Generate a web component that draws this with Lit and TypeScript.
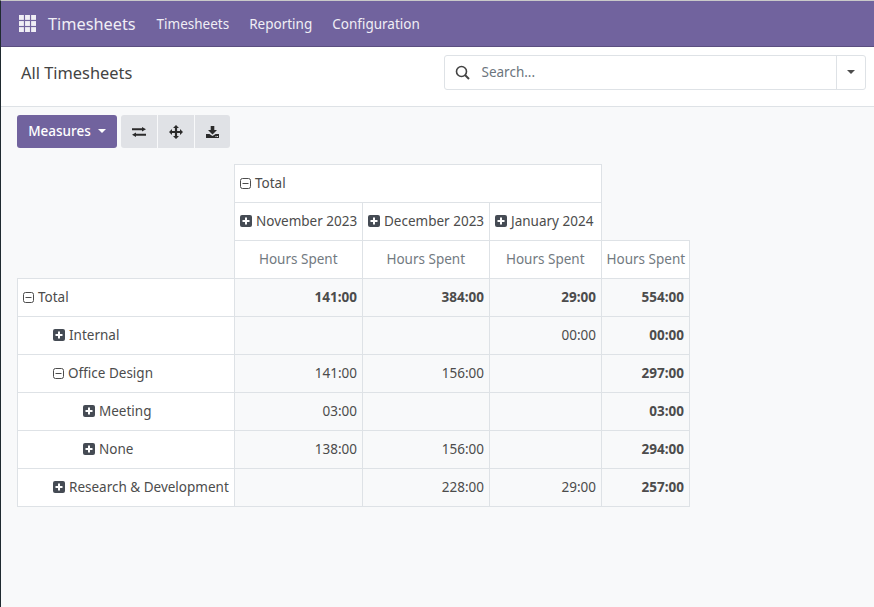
import { LitElement, html, css, svg } from 'lit';
import { customElement } from 'lit/decorators.js';

interface PivotRow {
  label: string;
  depth: number;
  open: boolean;
  values: string[];
  head?: boolean;
}

const ROWS: PivotRow[] = [
  { label: 'Total', depth: 0, open: true, head: true, values: ['141:00', '384:00', '29:00', '554:00'] },
  { label: 'Internal', depth: 1, open: false, values: ['', '', '00:00', '00:00'] },
  { label: 'Office Design', depth: 1, open: true, values: ['141:00', '156:00', '', '297:00'] },
  { label: 'Meeting', depth: 2, open: false, values: ['03:00', '', '', '03:00'] },
  { label: 'None', depth: 2, open: false, values: ['138:00', '156:00', '', '294:00'] },
  { label: 'Research & Development', depth: 1, open: false, values: ['', '228:00', '29:00', '257:00'] },
];

const INDENT = ['indent0', 'indent1', 'indent2'];

@customElement('app-root')
export class AppRoot extends LitElement {
  static styles = css`
    :host {
      display: block;
      height: 607px;
      overflow: hidden;
      background: #f8f9fa;
      border-left: 1px solid #1f2a30;
      border-top: 1px solid #c9c9c9;
      box-sizing: border-box;
      font-family: 'Noto Sans', sans-serif;
      font-size: 13.5px;
      color: #4c4c4c;
    }
    .nav {
      height: 46px;
      box-sizing: border-box;
      background: #71639e;
      border-bottom: 1px solid #5b4f80;
      display: flex;
      align-items: center;
      color: #fff;
    }
    .apps {
      display: flex;
      margin-left: 18px;
      margin-right: 12px;
    }
    .brand {
      font-size: 16.3px;
      margin-right: 21px;
      color: #f0eef5;
    }
    .menu {
      margin-right: 20px;
      color: #f0eef5;
    }
    .panel {
      height: 60px;
      box-sizing: border-box;
      background: #fff;
      border-bottom: 1px solid #dee2e6;
      display: flex;
      align-items: center;
      justify-content: space-between;
      padding: 0 8px 9px 20px;
    }
    .title {
      font-size: 16.4px;
      color: #434343;
    }
    .search {
      width: 422px;
      height: 35px;
      box-sizing: border-box;
      border: 1px solid #dee2e6;
      border-radius: 3px;
      display: flex;
      align-items: center;
    }
    .search-icon {
      display: flex;
      margin-left: 10px;
      margin-right: 11.5px;
    }
    .placeholder {
      flex: 1;
      color: #6c757d;
    }
    .drop {
      width: 28px;
      height: 100%;
      border-left: 1px solid #dee2e6;
      display: flex;
      align-items: center;
      justify-content: center;
    }
    .caret {
      width: 0;
      height: 0;
      border-left: 4px solid transparent;
      border-right: 4px solid transparent;
      border-top: 4px solid #4c4c4c;
    }
    .toolbar {
      display: flex;
      padding: 8px 0 0 16px;
      height: 33px;
    }
    .measures {
      width: 100px;
      height: 33px;
      box-sizing: border-box;
      background: #71639e;
      color: #fff;
      border-radius: 3px;
      display: flex;
      align-items: center;
      justify-content: center;
      gap: 7px;
      font-weight: 500;
      margin-right: 4px;
      padding-bottom: 2px;
    }
    .measures .caret {
      border-top-color: #fff;
    }
    .tool {
      width: 36px;
      height: 33px;
      background: #e0e2e6;
      display: flex;
      align-items: center;
      justify-content: center;
      margin-right: 1px;
    }
    .tool.first {
      border-radius: 3px 0 0 3px;
    }
    .tool.last {
      width: 35px;
      margin-right: 0;
      border-radius: 0 3px 3px 0;
    }
    table {
      border-collapse: collapse;
      table-layout: fixed;
      width: 672px;
      margin: 16px 0 0 15.5px;
    }
    td, th {
      height: 38px;
      padding: 0 4.5px 2px 5px;
      box-sizing: border-box;
      border: 1px solid #dee2e6;
      font-weight: 400;
      white-space: nowrap;
      overflow: visible;
    }
    .blank {
      border: none;
      border-bottom: 1px solid #dee2e6;
      background: transparent;
    }
    .top {
      background: #fff;
      text-align: left;
    }
    .measure {
      background: #fff;
      color: #727a81;
      text-align: center;
    }
    .row-head {
      background: #fff;
      text-align: left;
    }
    .value {
      background: #f8f9fa;
      text-align: right;
    }
    .strong {
      font-weight: 700;
    }
    .indent1 {
      padding-left: 35px;
    }
    .indent2 {
      padding-left: 65px;
    }
    .cell {
      display: flex;
      align-items: center;
      gap: 4.5px;
    }
    .cell svg {
      flex: none;
      margin-top: 1px;
    }
  `;

  private gridIcon() {
    const cells = [];
    for (let y = 0; y < 3; y++) {
      for (let x = 0; x < 3; x++) {
        cells.push(svg`<rect x=${x * 6.2} y=${y * 6.2} width="5" height="5" fill="#f0eef5"/>`);
      }
    }
    return html`<svg class="apps" width="17" height="17" viewBox="0 0 17.4 17.4">${cells}</svg>`;
  }

  private toggle(open: boolean) {
    if (open) {
      return html`<svg width="11" height="11" viewBox="0 0 11 11">
        <rect x=".5" y=".5" width="10" height="10" rx="2" fill="none" stroke="#4c4c4c"/>
        <path d="M2.5 5.5h6" stroke="#4c4c4c" stroke-width="1"/>
      </svg>`;
    }
    return html`<svg width="12" height="12" viewBox="0 0 12 12">
      <rect width="12" height="12" rx="2" fill="#454b54"/>
      <path d="M6 2.5v7M2.5 6h7" stroke="#fff" stroke-width="2"/>
    </svg>`;
  }

  private label(text: string, open: boolean) {
    return html`<div class="cell">${this.toggle(open)}<span>${text}</span></div>`;
  }

  render() {
    return html`
      <div class="nav">
        ${this.gridIcon()}
        <span class="brand">Timesheets</span>
        <span class="menu">Timesheets</span>
        <span class="menu">Reporting</span>
        <span class="menu">Configuration</span>
      </div>
      <div class="panel">
        <span class="title">All Timesheets</span>
        <div class="search">
          <span class="search-icon">
            <svg width="15" height="15" viewBox="0 0 15 15" fill="none" stroke="#434343">
              <circle cx="6.5" cy="6.5" r="5" stroke-width="1.6"/>
              <path d="M10 10l4 4" stroke-width="2"/>
            </svg>
          </span>
          <span class="placeholder">Search...</span>
          <span class="drop"><span class="caret"></span></span>
        </div>
      </div>
      <div class="toolbar">
        <div class="measures">Measures <span class="caret"></span></div>
        <div class="tool first">
          <svg width="14" height="10" viewBox="0 0 14 10" fill="#2b2b2b">
            <path d="M0 1.2h10V0l4 2.2-4 2.2V3.2H0zM14 6.8v2H4V10L0 7.8l4-2.2v1.2z"/>
          </svg>
        </div>
        <div class="tool">
          <svg width="14" height="14" viewBox="0 0 14 14" fill="#2b2b2b">
            <path d="M7 0l3 3H8.1v2.9H11V4l3 3-3 3V8.1H8.1V11H10l-3 3-3-3h1.9V8.1H3V10L0 7l3-3v1.9h2.9V3H4z"/>
          </svg>
        </div>
        <div class="tool last">
          <svg width="13" height="12" viewBox="0 0 13 12" fill="#2b2b2b">
            <path d="M4.7 0h3.6v4H11L6.5 8.5 2 4H4.7zM0 8h3.4l3.1 2 3.1-2H13v4H0z"/>
            <rect x="9.5" y="10" width="1" height="1" fill="#e0e2e6"/>
            <rect x="11" y="10" width="1" height="1" fill="#e0e2e6"/>
          </svg>
        </div>
      </div>
      <table>
        <colgroup>
          <col style="width:217px" /><col style="width:128px" /><col style="width:127px" /><col style="width:112px" /><col style="width:88px" />
        </colgroup>
        <tr>
          <th class="blank" rowspan="3"></th>
          <th class="top" colspan="3">${this.label('Total', true)}</th>
          <th style="border:none"></th>
        </tr>
        <tr>
          <th class="top">${this.label('November 2023', false)}</th>
          <th class="top">${this.label('December 2023', false)}</th>
          <th class="top">${this.label('January 2024', false)}</th>
          <th style="border:none;border-bottom:1px solid #dee2e6"></th>
        </tr>
        <tr>
          ${[0, 1, 2, 3].map(() => html`<th class="measure">Hours Spent</th>`)}
        </tr>
        ${ROWS.map(
          (row) => html`<tr>
            <td class="row-head ${INDENT[row.depth]}">${this.label(row.label, row.open)}</td>
            ${row.values.map(
              (v, i) => html`<td class="value ${row.head || i === 3 ? 'strong' : ''}">${v}</td>`,
            )}
          </tr>`,
        )}
      </table>
    `;
  }
}
